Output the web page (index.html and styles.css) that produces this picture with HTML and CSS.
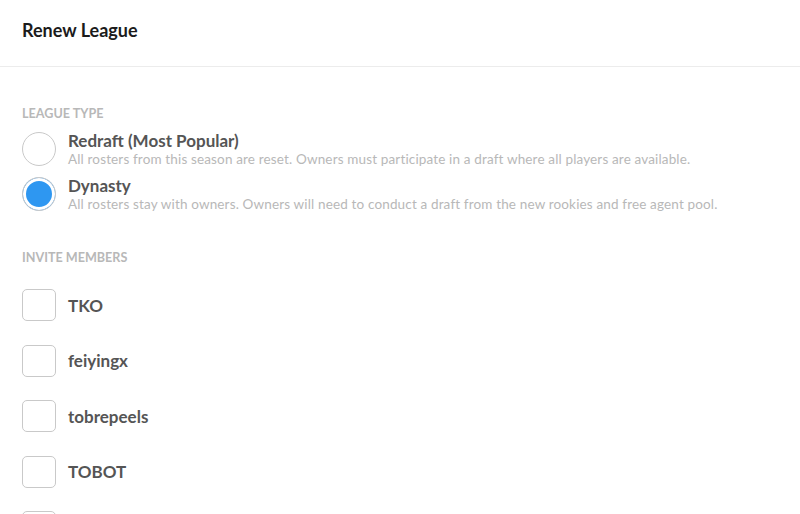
FILE: index.html
```html
<!DOCTYPE html>
<html lang="en">
<head>
<meta charset="UTF-8">
<meta name="viewport" content="width=device-width, initial-scale=1.0">
<title>Renew League</title>
<link rel="stylesheet" href="styles.css">
</head>
<body>
<header class="modal-header">
  <h1>Renew League</h1>
</header>

<div class="modal-body">
  <div class="field-label">League type</div>
  <div class="options">
    <label class="option">
      <span class="radio"></span>
      <span class="option-text">
        <span class="option-title">Redraft (Most Popular)</span>
        <span class="option-desc">All rosters from this season are reset. Owners must participate in a draft where all players are available.</span>
      </span>
    </label>
    <label class="option">
      <span class="radio checked"></span>
      <span class="option-text">
        <span class="option-title">Dynasty</span>
        <span class="option-desc">All rosters stay with owners. Owners will need to conduct a draft from the new rookies and free agent pool.</span>
      </span>
    </label>
  </div>

  <div class="field-label invite-label">Invite members</div>
  <div class="members">
    <label class="member"><span class="checkbox"></span>TKO</label>
    <label class="member"><span class="checkbox"></span>feiyingx</label>
    <label class="member"><span class="checkbox"></span>tobrepeels</label>
    <label class="member"><span class="checkbox"></span>TOBOT</label>
    <label class="member"><span class="checkbox"></span></label>
  </div>
</div>
</body>
</html>
```

FILE: styles.css
```css
:root {
  --text: #1b1b1b; --text-mid: #555555; --text-light: #b8b8b8;
  --border: #c9c9c9; --line: #ececec; --blue: #2e97f1;
}
* { box-sizing: border-box; margin: 0; padding: 0; }
body { font-family: 'Lato', 'Liberation Sans', sans-serif; background: #fff; color: var(--text); overflow: hidden; }

.modal-header { height: 67px; padding: 20px 22px 0; border-bottom: 1px solid var(--line); }
.modal-header h1 { font-size: 18px; font-weight: 700; line-height: 20px; color: var(--text); }

.modal-body { padding: 39px 22px 0; }
.field-label { font-size: 12.6px; font-weight: 700; line-height: 16px; text-transform: uppercase; color: var(--text-light); }

.options { display: flex; flex-direction: column; gap: 9px; margin-top: 10px; }
.option { display: flex; gap: 12px; align-items: flex-start; }
.radio { width: 34px; height: 34px; border: 1.5px solid var(--border); border-radius: 50%; flex-shrink: 0; }
.radio.checked { background: var(--blue); box-shadow: inset 0 0 0 3px #fff; }
.option-text { display: flex; flex-direction: column; }
.option-title { font-size: 17px; font-weight: 700; line-height: 18px; color: var(--text-mid); }
.option-desc { font-size: 13.5px; line-height: 18px; letter-spacing: 0.15px; color: var(--text-light); }

.invite-label { margin-top: 37px; }
.members { display: flex; flex-direction: column; gap: 23.5px; margin-top: 23px; }
.member { display: flex; align-items: center; gap: 12px; font-size: 17px; font-weight: 700; color: var(--text-mid); height: 32px; }
.checkbox { width: 34px; height: 32px; border: 1.5px solid var(--border); border-radius: 5px; flex-shrink: 0; }
```
